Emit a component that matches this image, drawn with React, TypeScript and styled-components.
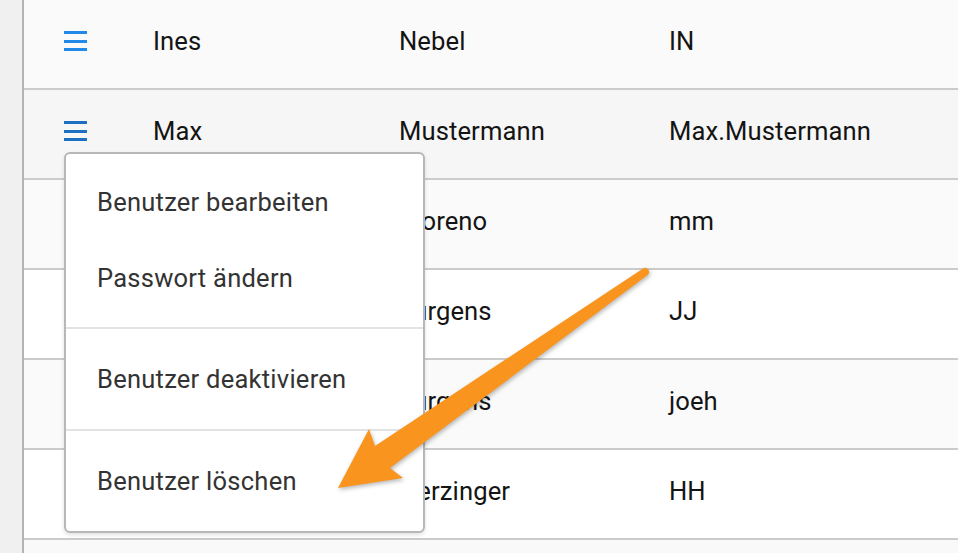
import styled, { createGlobalStyle } from "styled-components";

const GlobalStyle = createGlobalStyle`
  html, body {
    margin: 0;
    padding: 0;
    background: #ffffff;
    overflow: hidden;
  }
  body {
    font-family: Roboto, "Liberation Sans", Arial, sans-serif;
  }
`;

interface User {
  first: string;
  last: string;
  login: string;
}

const users: User[] = [
  { first: "Ines", last: "Nebel", login: "IN" },
  { first: "Max", last: "Mustermann", login: "Max.Mustermann" },
  { first: "Maria", last: "Moreno", login: "mm" },
  { first: "Julia", last: "Jürgens", login: "JJ" },
  { first: "Johannes", last: "Jürgens", login: "joeh" },
  { first: "Hans", last: "Herzinger", login: "HH" },
];

const Page = styled.div`
  position: relative;
  display: flex;
  width: 958px;
  height: 553px;
  overflow: hidden;
`;

const Sidebar = styled.div`
  width: 22px;
  flex-shrink: 0;
  background: #f0f0f0;
  border-right: 2px solid #b3b3b3;
`;

const Table = styled.div`
  flex: 1;
  display: flex;
  flex-direction: column;
`;

const Row = styled.div<{ $shade: string }>`
  display: grid;
  grid-template-columns: 129px 246px 270px 1fr;
  align-items: center;
  height: 88px;
  flex-shrink: 0;
  background: ${(p) => p.$shade};
  border-bottom: 2px solid #cbcbcb;
`;

const EmptyRow = styled.div`
  flex: 1;
  background: #f9f9f9;
`;

const IconCell = styled.div`
  padding-left: 40px;
  display: flex;
  align-items: center;
`;

const MenuButton = styled.button<{ $active?: boolean }>`
  border: none;
  background: none;
  padding: 0;
  width: 23px;
  height: 20px;
  display: flex;
  flex-direction: column;
  justify-content: space-between;
  cursor: pointer;
  margin-top: -6px;

  span {
    display: block;
    height: 3px;
    width: 23px;
    background: ${(p) => (p.$active ? "#1d6fc2" : "#2189e8")};
  }
`;

const Cell = styled.div`
  font-size: 25.6px;
  color: #141414;
  padding-bottom: 6px;
  white-space: nowrap;
  letter-spacing: 0.1px;
`;

const Menu = styled.div`
  position: absolute;
  left: 64px;
  top: 152px;
  width: 357px;
  padding: 10px 0 12px;
  background: #ffffff;
  border: 2px solid #b7b7b7;
  border-radius: 6px;
  box-shadow: 0 2px 4px rgba(0, 0, 0, 0.12);
`;

const MenuItem = styled.div`
  height: 76px;
  display: flex;
  align-items: center;
  padding-left: 31px;
  font-size: 25.5px;
  letter-spacing: 0.25px;
  color: #333333;
  cursor: pointer;
`;

const Divider = styled.div<{ $top: number; $bottom: number }>`
  height: 2px;
  background: #e3e3e3;
  margin: ${(p) => p.$top}px 0 ${(p) => p.$bottom}px;
`;

const Arrow = styled.svg`
  position: absolute;
  left: 0;
  top: 0;
  pointer-events: none;
  filter: drop-shadow(1px 2px 2px rgba(0, 0, 0, 0.28));
`;

const shades = ["#fafafa", "#f6f6f6", "#fafafa", "#ffffff", "#fafafa", "#ffffff"];

const App = () => {
  return (
    <>
      <GlobalStyle />
      <Page>
        <Sidebar />
        <Table>
          {users.map((user, i) => (
            <Row key={user.first + user.last} $shade={shades[i]}>
              <IconCell>
                <MenuButton $active={i === 1} aria-label="Menü">
                  <span />
                  <span />
                  <span />
                </MenuButton>
              </IconCell>
              <Cell>{user.first}</Cell>
              <Cell>{user.last}</Cell>
              <Cell>{user.login}</Cell>
            </Row>
          ))}
          <EmptyRow />
        </Table>

        <Menu>
          <MenuItem>Benutzer bearbeiten</MenuItem>
          <MenuItem>Passwort ändern</MenuItem>
          <Divider $top={11} $bottom={12} />
          <MenuItem>Benutzer deaktivieren</MenuItem>
          <Divider $top={12} $bottom={12} />
          <MenuItem>Benutzer löschen</MenuItem>
        </Menu>

        <Arrow width="958" height="553" viewBox="0 0 958 553">
          <path
            d="M 642.7 268.7 L 375 446 L 369 429 L 338 488 L 403 478 L 390 468 L 647.3 275.3 A 4 4 0 0 0 642.7 268.7 Z"
            fill="#f9951f"
          />
        </Arrow>
      </Page>
    </>
  );
};

export default App;
